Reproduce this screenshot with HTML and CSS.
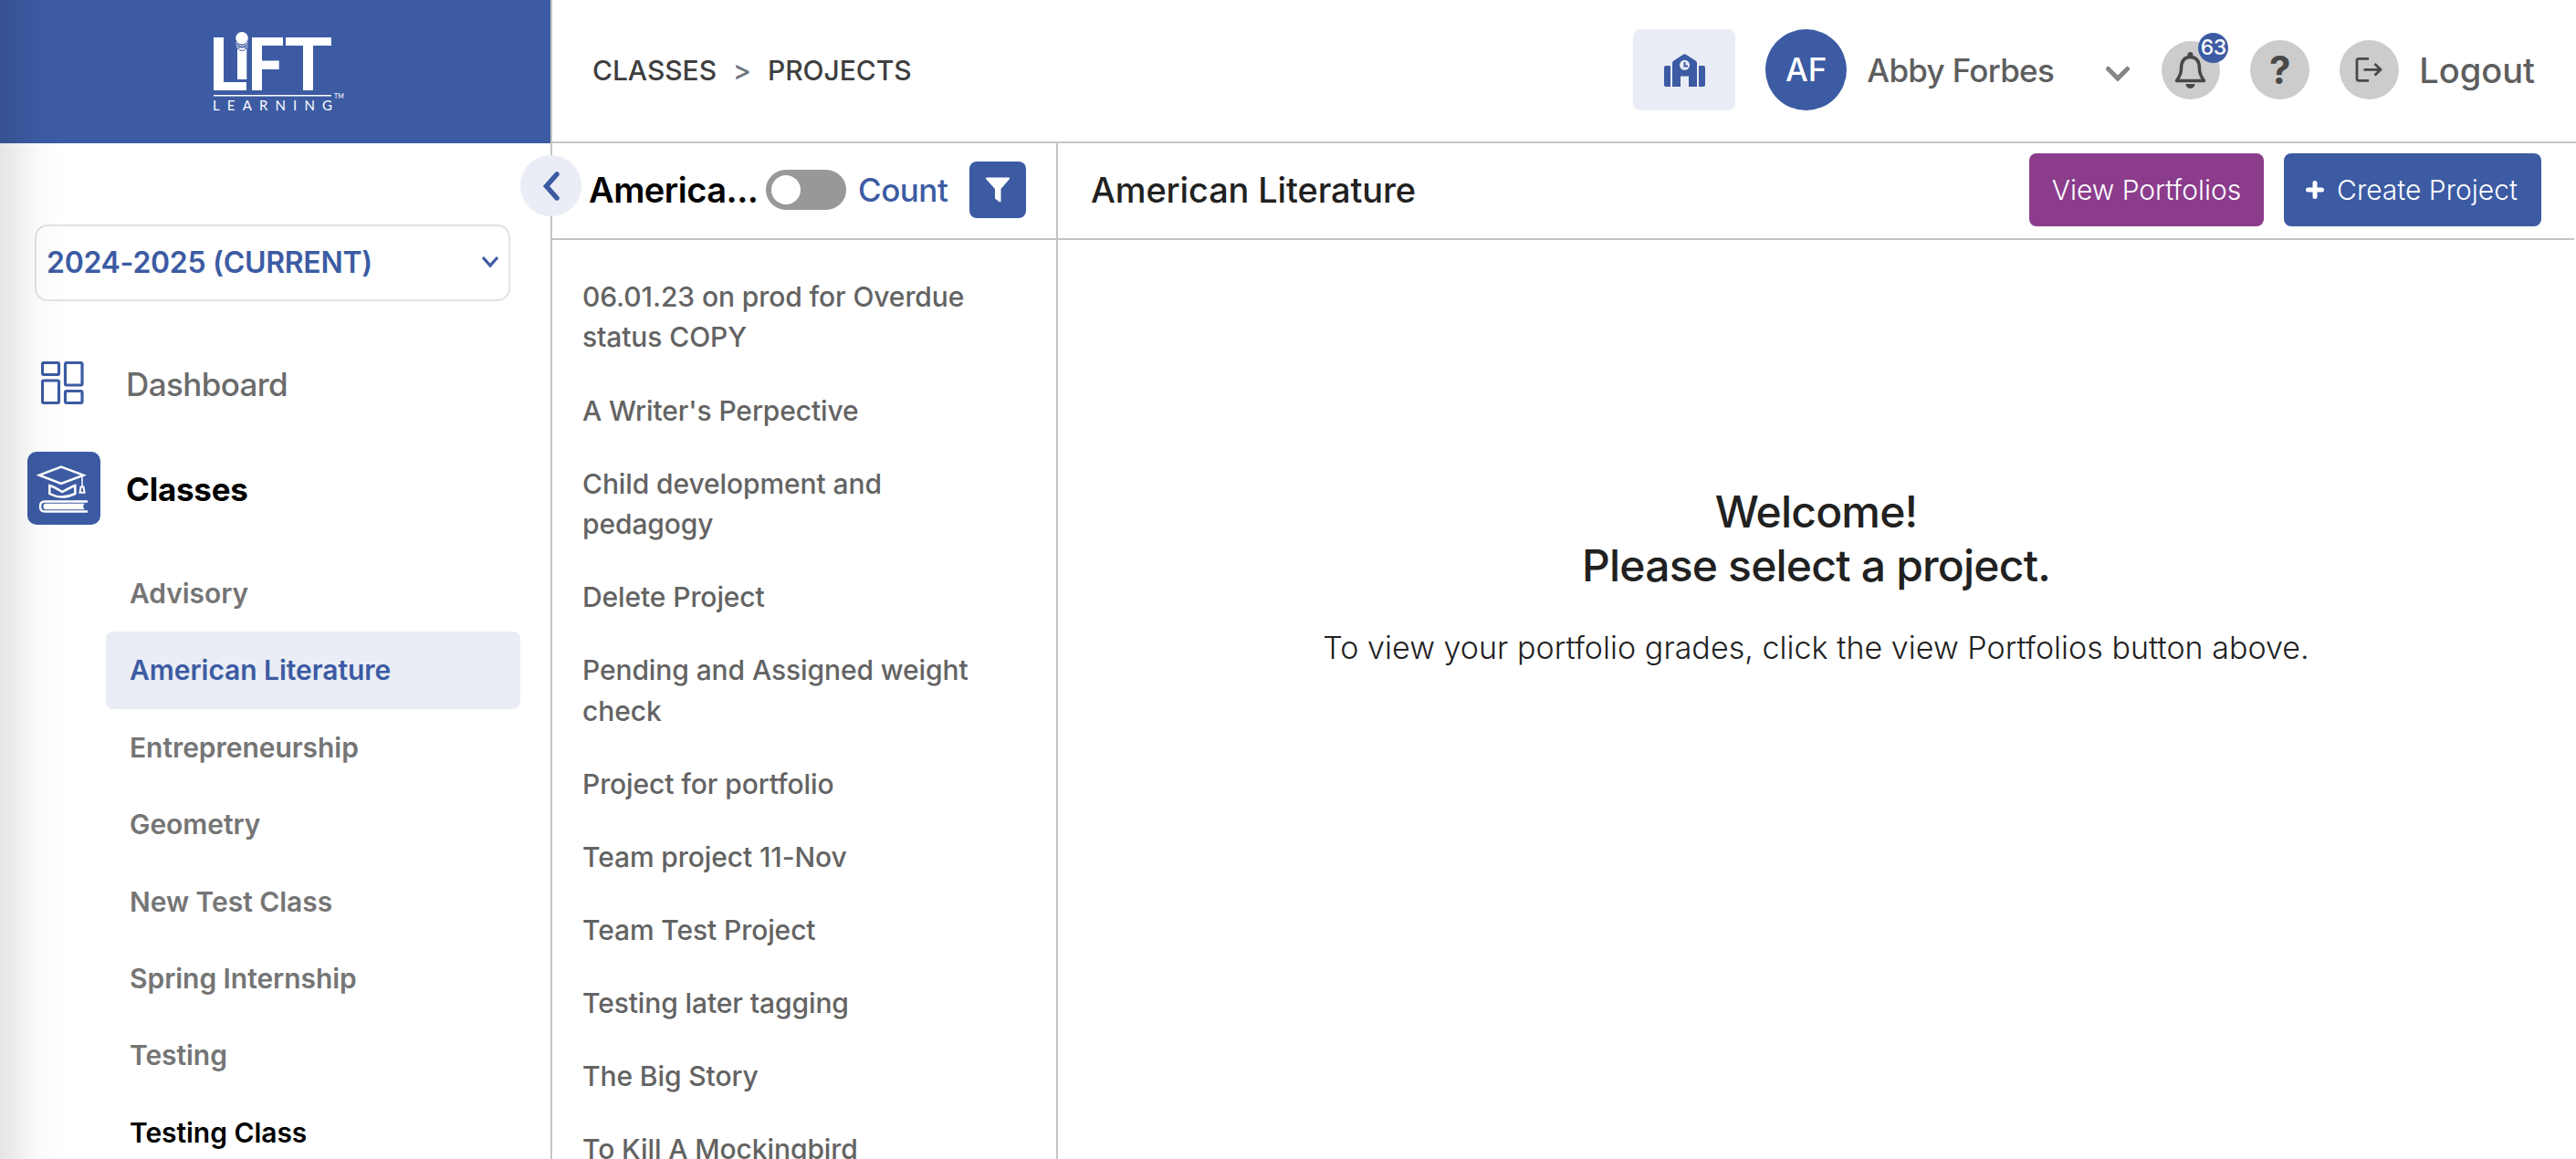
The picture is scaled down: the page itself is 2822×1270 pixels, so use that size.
FILE: index.html
```
<!DOCTYPE html>
<html lang="en">
<head>
    <meta charset="UTF-8">
    <meta name="viewport" content="width=device-width, initial-scale=1.0">
    <title>Projects - LiFT Learning</title>
    <link rel="stylesheet" href="styles.css">
</head>
<body>

    <aside class="sidebar">
        <div class="brand">
            <svg width="150" height="90" viewBox="0 0 150 90" fill="#fff">
                <path d="M5 7h11v49h25v9H5z"/>
                <path d="M31 19h10.300v34H31z"/>
                <g fill="none" stroke="#fff" stroke-width="1">
                    <path d="M29.500 12q6.500 9 13 0M29.500 14.500q6.500 9 13 0M30 17q6 8 12.500 0"/>
                    <path d="M30 13.500q6.500 9 12.500 0M31 18.500q5 6 10.500 0" stroke="#3c5ba3"/>
                </g>
                <circle cx="36" cy="7.700" r="6.800"/>
                <path d="M47 7h34v9H58v16.500h18.700V42H58v23H47z"/>
                <path d="M84 7h50v9h-20v49h-11V16H84z"/>
                <path d="M5 70h129v1.400H5z"/>
                <text class="logo-sub" x="4" y="86.700" textLength="131">LEARNING</text>
                <text class="logo-tm" x="137" y="74">TM</text>
            </svg>
        </div>
        <button class="collapse" aria-label="Collapse menu">
            <svg width="20" height="34" viewBox="0 0 20 34"><path d="M16 4 4.500 17 16 30"/></svg>
        </button>

        <div class="year">
            <span>2024-2025 (CURRENT)</span>
            <svg width="20" height="14" viewBox="0 0 20 14"><path d="M2 2l8 9 8-9"/></svg>
        </div>

        <nav class="menu">
            <a class="menu-item" href="#">
                <span class="menu-icon">
                    <svg class="dash" width="47" height="47" viewBox="0 0 47 47">
                        <rect x="1.500" y="1.500" width="18" height="13" rx="1.500"/>
                        <rect x="26.500" y="1.500" width="18.500" height="24.500" rx="1.500"/>
                        <rect x="1.500" y="21" width="18" height="24.500" rx="1.500"/>
                        <rect x="26.500" y="32.500" width="18.500" height="13" rx="1.500"/>
                    </svg>
                </span>
                <span>Dashboard</span>
            </a>
            <a class="menu-item active" href="#">
                <span class="menu-icon">
                    <svg width="80" height="80" viewBox="0 0 80 80" fill="none" stroke="#fff" stroke-width="2.500">
                        <path d="M13 25.700 37 16.500l24.500 9.200L37 35z"/>
                        <path d="M24.300 37v9q13.500 7 28 0v-9q-3 1-14 7-10-6-14-7z"/>
                        <path d="M60 26v12" stroke-width="1.500"/>
                        <path d="M58.500 38.500h3l1 6.200h-5z" stroke-width="2"/>
                        <path d="M66 54.600H19q-5 0-5 5.500t5 5.500h47"/>
                        <path d="M62.700 56.800H20q-2.500 0-2.500 3.200t2.500 3.200h42.700q-3-3.200 0-6.400z" fill="#fff" stroke="none"/>
                    </svg>
                </span>
                <span>Classes</span>
            </a>
        </nav>

        <ul class="classes">
            <li>Advisory</li>
            <li class="selected">American Literature</li>
            <li>Entrepreneurship</li>
            <li>Geometry</li>
            <li>New Test Class</li>
            <li>Spring Internship</li>
            <li>Testing</li>
            <li class="dark">Testing Class</li>
        </ul>
    </aside>

    <div class="page">
        <header class="topbar">
            <div class="crumbs">
                <span>CLASSES</span><span class="sep">&gt;</span><span>PROJECTS</span>
            </div>
            <div class="school">
                <svg width="45" height="36" viewBox="0 0 45 36" fill="#3c5ba3">
                    <path d="M2 13h5v23H2q-2 0-2-2V15q0-2 2-2zM38 13h5q2 0 2 2v19q0 2-2 2h-5z"/>
                    <path d="M9 36V10q0-1.500 1.500-2.500L21 .700q1.500-1 3 0L34.500 7.500Q36 8.500 36 10v26h-9V24.500h-9V36z"/>
                    <circle cx="22.500" cy="12.300" r="5.500" fill="#eaedf5"/>
                    <path d="M22.500 9v4.500h3.500" fill="none" stroke="#3c5ba3" stroke-width="2"/>
                </svg>
            </div>
            <div class="avatar">AF</div>
            <div class="user">Abby Forbes</div>
            <svg class="caret" width="28" height="18" viewBox="0 0 28 18"><path d="M3.500 3.500 14 14 24.500 3.500"/></svg>
            <div class="round bell">
                <svg width="64" height="64" viewBox="0 0 64 64">
                    <path d="M31.500 17.500c-8 0-10 6-10 13 0 6-2 8.500-5 13h30c-3-4.500-5-7-5-13 0-7-2-13-10-13z" fill="none" stroke="#484848" stroke-width="3.500" stroke-linejoin="round"/>
                    <path d="M28.500 17v-2a3 3 0 0 1 6 0v2zM26.500 47h10a5 5 0 0 1-10 0z" fill="#484848"/>
                </svg>
                <span class="badge">63</span>
            </div>
            <div class="round help">?</div>
            <div class="round exit">
                <svg width="64" height="64" viewBox="0 0 64 64" fill="none" stroke="#484848" stroke-width="2.800">
                    <path d="M32 20.300H21q-2 0-2 2v20q0 2 2 2h11M26.500 32.300H45M38.500 26l6.500 6.300-6.500 6.300"/>
                </svg>
            </div>
            <div class="logout">Logout</div>
        </header>

        <div class="columns">
            <section class="projects">
                <div class="bar">
                    <h2>America...</h2>
                    <span class="switch"></span>
                    <span class="count">Count</span>
                    <button class="filter" aria-label="Filter">
                        <svg width="28" height="28" viewBox="0 0 28 28" fill="#fff"><path d="M1.500.500h25q1 .500.500 1.500L17.500 13v13.500q-.500 1.500-2 .500L11.500 24q-.500-.500-.500-1.500V13L1 2Q.500 1 1.500.500z"/></svg>
                    </button>
                </div>
                <ul class="project-list">
                    <li>06.01.23 on prod for Overdue status COPY</li>
                    <li>A Writer's Perpective</li>
                    <li>Child development and pedagogy</li>
                    <li>Delete Project</li>
                    <li>Pending and Assigned weight check</li>
                    <li>Project for portfolio</li>
                    <li>Team project 11-Nov</li>
                    <li>Team Test Project</li>
                    <li>Testing later tagging</li>
                    <li>The Big Story</li>
                    <li>To Kill A Mockingbird</li>
                </ul>
            </section>

            <main class="content">
                <div class="bar">
                    <h1>American Literature</h1>
                    <button class="btn view">View Portfolios</button>
                    <button class="btn create">
                        <svg width="20" height="20" viewBox="0 0 20 20"><path d="M10 2.500v15M2.500 10h15"/></svg>
                        Create Project
                    </button>
                </div>
                <div class="welcome">
                    <h3>Welcome!<br>Please select a project.</h3>
                    <p>To view your portfolio grades, click the view Portfolios button above.</p>
                </div>
            </main>
        </div>
    </div>

</body>
</html>
```

FILE: styles.css
```
* { box-sizing: border-box; }
body {
    margin: 0;
    height: 1270px;
    display: flex;
    overflow: hidden;
    font-family: Inter, sans-serif;
    background: #fff;
}
h1, h2, h3, p, ul { margin: 0; padding: 0; }
ul { list-style: none; }
button { border: 0; padding: 0; font-family: inherit; }

/* sidebar */
.sidebar { position: relative; width: 605px; flex: none; border-right: 2px solid #c4c4c4; }
.sidebar::before {
    content: "";
    position: absolute;
    left: 0;
    top: 0;
    width: 70px;
    height: 1270px;
    background: linear-gradient(to right, rgba(0,0,0,.1), rgba(0,0,0,.07) 25%, rgba(0,0,0,.02) 60%, rgba(0,0,0,0));
}
.brand { height: 157px; background: #3c5ba3; padding: 34px 0 0 229px; }
.brand svg { display: block; }
.logo-sub { font: 15px Lato, sans-serif; }
.logo-tm { font: 7px Lato, sans-serif; }
.collapse {
    position: absolute;
    z-index: 1;
    right: -34px;
    top: 170px;
    width: 67px;
    height: 67px;
    border-radius: 50%;
    background: #eaedf5;
    display: flex;
    align-items: center;
    justify-content: center;
}
.collapse path { fill: none; stroke: #3c5ba3; stroke-width: 5.5; stroke-linecap: round; }
.year {
    display: flex;
    align-items: center;
    justify-content: space-between;
    margin: 89px 0 0 38px;
    width: 521px;
    height: 84px;
    border: 2px solid #e2e2e2;
    border-radius: 14px;
    padding: 0 10px 2px 11px;
    color: #3c5ba3;
    font-size: 32px;
    font-weight: 600;
    letter-spacing: -.3px;
}
.year path { fill: none; stroke: #3c5ba3; stroke-width: 3.2; }
.menu { padding: 50px 0 0 30px; }
.menu-item {
    display: flex;
    align-items: center;
    gap: 28px;
    height: 80px;
    margin-bottom: 35px;
    color: #6b6b6b;
    font-size: 35px;
    font-weight: 500;
    letter-spacing: -.6px;
    text-decoration: none;
}
.menu-item > span:last-child { padding-top: 2px; }
.menu-icon { width: 80px; height: 80px; border-radius: 10px; display: flex; align-items: center; justify-content: center; }
.dash { fill: none; stroke: #3c5ba3; stroke-width: 3.2; margin: 0 3px 2px 0; }
.active { color: #000; font-weight: 700; letter-spacing: -.25px; }
.active .menu-icon { background: #3c5ba3; }
.classes { padding-left: 116px; margin-top: -2px; }
.classes li {
    width: 454px;
    height: 84.4px;
    line-height: 85px;
    padding-left: 26px;
    font-size: 30px;
    font-weight: 600;
    letter-spacing: -.05px;
    color: #757575;
    border-radius: 8px;
}
.classes .selected { background: #eaedf5; color: #3c5ba3; }
.classes .dark { color: #000; }

/* top bar */
.page { flex: 1; }
.topbar {
    height: 157px;
    border-bottom: 2px solid #c4c4c4;
    display: flex;
    align-items: center;
    padding: 0 45px 2px 44px;
    font-size: 35px;
    font-weight: 500;
    color: #5e5e5e;
}
.crumbs { font-size: 30px; flex: 1; color: #3f3f3f; letter-spacing: -.05px; }
.sep { margin: 0 18px; color: #6c757d; }
.school {
    width: 112px;
    height: 89px;
    margin-right: 33px;
    border-radius: 8px;
    background: #eaedf5;
    display: flex;
    align-items: center;
    justify-content: center;
}
.avatar {
    width: 89px;
    height: 89px;
    line-height: 89px;
    border-radius: 50%;
    background: #3c5ba3;
    color: #fff;
    text-align: center;
}
.user { width: 261px; margin-left: 22px; letter-spacing: -.7px; }
.caret { margin: 8px 34px 0 0; }
.caret path { fill: none; stroke: #858585; stroke-width: 5; stroke-linecap: round; }
.round { position: relative; width: 65px; height: 65px; border-radius: 50%; background: #ccc; }
.bell, .help { margin-right: 33px; }
.bell { width: 64px; height: 64px; }
.badge {
    position: absolute;
    top: -9px;
    right: -9px;
    width: 33px;
    height: 33px;
    line-height: 33px;
    border-radius: 50%;
    background: #3c5ba3;
    color: #fff;
    font-size: 23px;
    letter-spacing: -.5px;
    text-align: center;
}
.help { color: #484848; font-size: 42px; font-weight: 700; line-height: 66px; text-align: center; }
.logout { margin-left: 22px; font-size: 38px; }

/* project list */
.columns { display: flex; }
.projects { width: 554px; border-right: 2px solid #c4c4c4; height: 1113px; }
.bar { height: 106px; border-bottom: 2px solid #c4c4c4; display: flex; align-items: center; padding-bottom: 2px; }
.projects .bar { padding-left: 40px; }
.bar h2 { width: 194px; font-size: 38px; font-weight: 600; letter-spacing: -.5px; white-space: nowrap; }
.switch { width: 88px; height: 44px; border-radius: 22px; background: #97989a; padding: 6px; }
.switch::before { content: ""; display: block; width: 32px; height: 32px; border-radius: 50%; background: #fff; }
.count { width: 122px; margin-left: 13px; font-size: 35px; font-weight: 500; letter-spacing: -.5px; color: #3c5ba3; }
.filter {
    width: 62px;
    height: 62px;
    border-radius: 8px;
    background: #3c5ba3;
    display: flex;
    align-items: center;
    justify-content: center;
}
.project-list { padding: 40px 50px 0 33px; }
.project-list li {
    margin-bottom: 35.7px;
    font-size: 30px;
    font-weight: 500;
    line-height: 44.4px;
    letter-spacing: -.1px;
    color: #636363;
}

/* main area */
.content { flex: 1; margin-right: 2px; }
.content .bar { padding-left: 36px; }
.bar h1 { flex: 1; font-size: 38px; font-weight: 500; letter-spacing: -.15px; color: #212121; }
.btn {
    width: 257px;
    height: 80px;
    margin-right: 22px;
    border-radius: 8px;
    background: #8b3d8c;
    color: #fff;
    font-size: 30px;
    font-weight: 300;
    display: flex;
    align-items: center;
    justify-content: center;
    gap: 14px;
}
.create { width: 282px; margin-right: 36px; padding-right: 2px; background: #3c5ba3; }
.btn path { stroke: #fff; stroke-width: 5; stroke-linecap: round; }
.welcome { text-align: center; padding-top: 268px; color: #212121; }
.welcome h3 { font-size: 48px; font-weight: 500; line-height: 59px; letter-spacing: -.8px; }
.welcome p { font-size: 34px; font-weight: 300; margin-top: 40px; letter-spacing: .05px; }
```
